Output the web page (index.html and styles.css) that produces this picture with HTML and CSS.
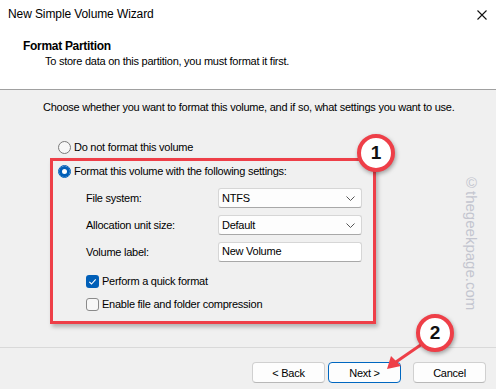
FILE: index.html
```html
<!DOCTYPE html>
<html>
<head>
<meta charset="utf-8">
<link rel="stylesheet" href="styles.css">
</head>
<body>
<div class="window">
  <div class="top">
    <div class="titlebar">
      <span class="title">New Simple Volume Wizard</span>
      <svg class="close" width="10" height="10" viewBox="0 0 10 10"><path d="M0.5 0.5 L9.5 9.5 M9.5 0.5 L0.5 9.5" stroke="#111" stroke-width="1.1" fill="none"/></svg>
    </div>
    <div class="heading">
      <div class="h-title">Format Partition</div>
      <div class="h-sub">To store data on this partition, you must format it first.</div>
    </div>
  </div>
  <div class="content">
    <div class="intro">Choose whether you want to format this volume, and if so, what settings you want to use.</div>
    <div class="row radio-row first-radio">
      <span class="radio"></span>
      <span>Do not format this volume</span>
    </div>
    <div class="redbox">
      <div class="row radio-row">
        <span class="radio checked"></span>
        <span>Format this volume with the following settings:</span>
      </div>
      <div class="field fs">
        <span class="label">File system:</span>
        <div class="combo"><span>NTFS</span><svg width="9" height="5" viewBox="0 0 9 5"><path d="M0.5 0.5 L4.5 4.5 L8.5 0.5" stroke="#555" stroke-width="1" fill="none"/></svg></div>
      </div>
      <div class="field">
        <span class="label">Allocation unit size:</span>
        <div class="combo"><span>Default</span><svg width="9" height="5" viewBox="0 0 9 5"><path d="M0.5 0.5 L4.5 4.5 L8.5 0.5" stroke="#555" stroke-width="1" fill="none"/></svg></div>
      </div>
      <div class="field">
        <span class="label">Volume label:</span>
        <div class="textbox">New Volume</div>
      </div>
      <div class="row check-row cb1">
        <svg class="cb" width="13" height="13" viewBox="0 0 13 13"><rect x="0" y="0" width="13" height="13" rx="3" fill="#005fb8"/><path d="M3.3 6.9 L5.5 9 L9.7 4.4" stroke="#fff" stroke-width="1.1" fill="none"/></svg>
        <span>Perform a quick format</span>
      </div>
      <div class="row check-row cb2">
        <svg class="cb" width="13" height="13" viewBox="0 0 13 13"><rect x="0.5" y="0.5" width="12" height="12" rx="2.5" fill="#f7f7f7" stroke="#8a8a8a" stroke-width="1"/></svg>
        <span>Enable file and folder compression</span>
      </div>
    </div>
  </div>
  <div class="separator"></div>
  <div class="buttons">
    <div class="btn">&lt; Back</div>
    <div class="btn primary">Next &gt;</div>
    <div class="btn cancel">Cancel</div>
  </div>

  <div class="badge badge1">1</div>
  <svg class="arrow" width="60" height="40" viewBox="0 0 60 40">
    <path d="M40 6 L8 28" stroke="#ee3f48" stroke-width="3" fill="none" stroke-linecap="round"/>
    <path d="M2 33 L6 20 L16 30 Z" fill="#ee3f48"/>
  </svg>
  <div class="badge badge2">2</div>
  <div class="watermark">©thegeekpage.com</div>
</div>
</body>
</html>
```

FILE: styles.css
```css
html, body {
  margin: 0;
  padding: 0;
}
body {
  width: 496px;
  height: 389px;
  overflow: hidden;
  background: #f0f0f0;
  font-family: "Liberation Sans", Arial, sans-serif;
  font-size: 11px;
  letter-spacing: -0.25px;
  color: #000;
}
.window {
  position: relative;
  width: 496px;
  height: 389px;
}
.top {
  background: #fff;
  height: 89px;
  border-bottom: 1px solid #a0a0a0;
}
.titlebar {
  display: flex;
  justify-content: space-between;
  align-items: flex-start;
  padding: 7px 9px 0 8px;
  height: 22px;
  line-height: 14px;
  font-size: 12px;
  letter-spacing: -0.1px;
}
.close {
  margin-top: 3px;
}
.heading {
  padding-left: 23px;
  padding-top: 10px;
  line-height: 15px;
}
.h-title {
  font-weight: bold;
  font-size: 12px;
  letter-spacing: -0.3px;
}
.h-sub {
  padding-left: 22px;
}
.content {
  padding-top: 10px;
}
.intro {
  margin-left: 43px;
  line-height: 14px;
  white-space: nowrap;
}
.row {
  display: flex;
  align-items: center;
  height: 14px;
}
.radio-row {
  gap: 3px;
}
.first-radio {
  margin-top: 26px;
  margin-left: 58px;
}
.radio {
  width: 11px;
  height: 11px;
  border: 1px solid #7a7a7a;
  border-radius: 50%;
  background: #f7f7f7;
  box-sizing: content-box;
}
.radio.checked {
  border-color: #005fb8;
  background: #fff;
  box-shadow: inset 0 0 0 3px #005fb8;
}
.redbox {
  margin-left: 50px;
  margin-top: 4px;
  width: 315px;
  height: 157px;
  border: 3px solid #ee3f48;
  box-shadow: 2px 3px 4px rgba(0, 0, 0, 0.25);
  padding-left: 5px;
  padding-top: 3px;
  box-sizing: content-box;
}
.field {
  display: flex;
  align-items: center;
  margin-left: 28px;
  margin-top: 7px;
  height: 20px;
}
.field.fs {
  margin-top: 10px;
}
.label {
  width: 132px;
}
.combo, .textbox {
  width: 144px;
  height: 20px;
  box-sizing: border-box;
  border: 1px solid #d6d6d6;
  border-bottom-color: #a8a8a8;
  border-radius: 3px;
  background: #fdfdfd;
  display: flex;
  align-items: center;
  justify-content: space-between;
  padding: 0 6px 0 3px;
}
.textbox {
  background: #fff;
  align-items: flex-start;
  padding-top: 2px;
}
.check-row {
  margin-left: 28px;
  gap: 3px;
}
.cb1 {
  margin-top: 12px;
}
.cb2 {
  margin-top: 9px;
}
.separator {
  margin-top: 23px;
  height: 1px;
  background: #d9d9d9;
}
.buttons {
  display: flex;
  justify-content: flex-end;
  padding-right: 10px;
  margin-top: 14px;
  gap: 3px;
}
.btn {
  width: 73px;
  height: 21px;
  box-sizing: border-box;
  border: 1px solid #d0d0d0;
  border-bottom-color: #b8b8b8;
  border-radius: 4px;
  background: #fdfdfd;
  display: flex;
  align-items: center;
  justify-content: center;
}
.btn.primary {
  border: 1px solid #0067c0;
}
.btn.cancel {
  margin-left: 9px;
}
.badge {
  position: absolute;
  width: 30px;
  height: 30px;
  border: 4px solid #ee3f48;
  border-radius: 50%;
  background: #fff;
  display: flex;
  align-items: center;
  justify-content: center;
  font-weight: bold;
  font-size: 19px;
  letter-spacing: 0;
  color: #111;
  box-shadow: 1px 2px 4px rgba(0, 0, 0, 0.35);
}
.badge1 {
  left: 357px;
  top: 134px;
}
.badge2 {
  left: 416px;
  top: 314px;
}
.arrow {
  position: absolute;
  left: 385px;
  top: 336px;
}
.watermark {
  position: absolute;
  left: 464px;
  top: 174px;
  writing-mode: vertical-rl;
  font-size: 15px;
  letter-spacing: 0;
  color: #c3c5cf;
  line-height: 14px;
}
```
